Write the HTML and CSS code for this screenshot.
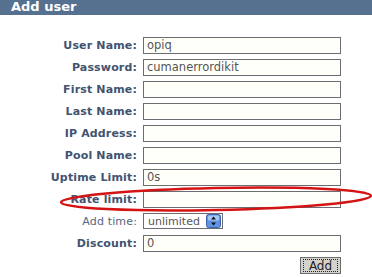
FILE: index.html
```html
<!DOCTYPE html>
<html lang="en">
<head>
  <meta charset="UTF-8">
  <title>Add user</title>
  <link rel="stylesheet" href="styles.css">
</head>
<body>
  <div class="panel-title">Add user</div>

  <form class="user-form">
    <label class="lbl">User Name:</label>
    <div class="field"><span class="input">opiq</span></div>

    <label class="lbl">Password:</label>
    <div class="field"><span class="input">cumanerrordikit</span></div>

    <label class="lbl">First Name:</label>
    <div class="field"><span class="input"></span></div>

    <label class="lbl">Last Name:</label>
    <div class="field"><span class="input"></span></div>

    <label class="lbl">IP Address:</label>
    <div class="field"><span class="input"></span></div>

    <label class="lbl">Pool Name:</label>
    <div class="field"><span class="input"></span></div>

    <label class="lbl">Uptime Limit:</label>
    <div class="field"><span class="input">0s</span></div>

    <label class="lbl">Rate limit:</label>
    <div class="field"><span class="input"></span></div>

    <label class="lbl plain">Add time:</label>
    <div class="field">
      <span class="select">
        <span class="select-text">unlimited</span>
        <svg class="spin" width="15" height="14" viewBox="0 0 15 14">
          <rect x="0.5" y="0.5" width="14" height="13" rx="2" fill="#5f93e0" stroke="#3a64b0"/>
          <rect x="2" y="1.5" width="11" height="5" rx="1.5" fill="#a9c8f4"/>
          <path d="M7.5 2.5 L10 5.5 L5 5.5 Z" fill="#111"/>
          <path d="M7.5 11.5 L10 8.5 L5 8.5 Z" fill="#111"/>
        </svg>
      </span>
    </div>

    <label class="lbl">Discount:</label>
    <div class="field"><span class="input">0</span></div>

    <span></span>
    <div class="field actions"><span class="btn"><span class="btn-focus">Add</span></span></div>
  </form>

  <!-- cervena elipsa kolem Rate limit -->
  <svg class="mark" width="372" height="277" viewBox="0 0 372 277">
    <ellipse cx="216" cy="199" rx="155" ry="11" transform="rotate(-1.2 216 199)"
             fill="none" stroke="#d41414" stroke-width="2.5"/>
  </svg>
</body>
</html>
```

FILE: styles.css
```css
body {
  margin: 0;
  font-family: "DejaVu Sans", Verdana, sans-serif;
  font-size: 11px;
  background-color: #fff;
  position: relative;
  width: 372px;
  height: 277px;
  overflow: hidden;
}
.panel-title {
  background-color: #56708f;
  color: #fff;
  font-weight: bold;
  font-size: 13px;
  height: 15px;
  line-height: 14px;
  padding-left: 11px;
}
.user-form {
  display: grid;
  grid-template-columns: 137px 198px;
  grid-auto-rows: 22px;
  column-gap: 6px;
  align-items: center;
  margin: 0;
  padding-top: 19px;
}
.lbl {
  text-align: right;
  font-weight: bold;
  color: #425370;
  white-space: nowrap;
  letter-spacing: 0.15px;
}
.lbl.plain {
  font-weight: normal;
  color: #56667e;
}
.field {
  display: flex;
  align-items: center;
}
.input {
  box-sizing: border-box;
  display: block;
  width: 198px;
  height: 17px;
  border: 1px solid #6a6d72;
  background-color: #fffffa;
  color: #555;
  padding-left: 3px;
  line-height: 15px;
  font-size: 11.5px;
}
.select {
  box-sizing: border-box;
  display: flex;
  align-items: center;
  justify-content: space-between;
  width: 80px;
  height: 16px;
  border: 1px solid #6a6d72;
  background-color: #fff;
  padding: 0 1px 0 4px;
  color: #555;
  font-size: 11px;
}
.spin {
  display: block;
}
.actions {
  justify-content: flex-end;
}
.btn {
  box-sizing: border-box;
  width: 41px;
  height: 17px;
  background-color: #d4d2cc;
  border: 1px solid #6e6e6e;
  padding: 1px 2px;
  display: flex;
  font-size: 12px;
  color: #222;
}
.btn-focus {
  flex: 1;
  border: 1px dotted #222;
  text-align: center;
  line-height: 12px;
}
.mark {
  position: absolute;
  left: 0;
  top: 0;
  pointer-events: none;
}
```
